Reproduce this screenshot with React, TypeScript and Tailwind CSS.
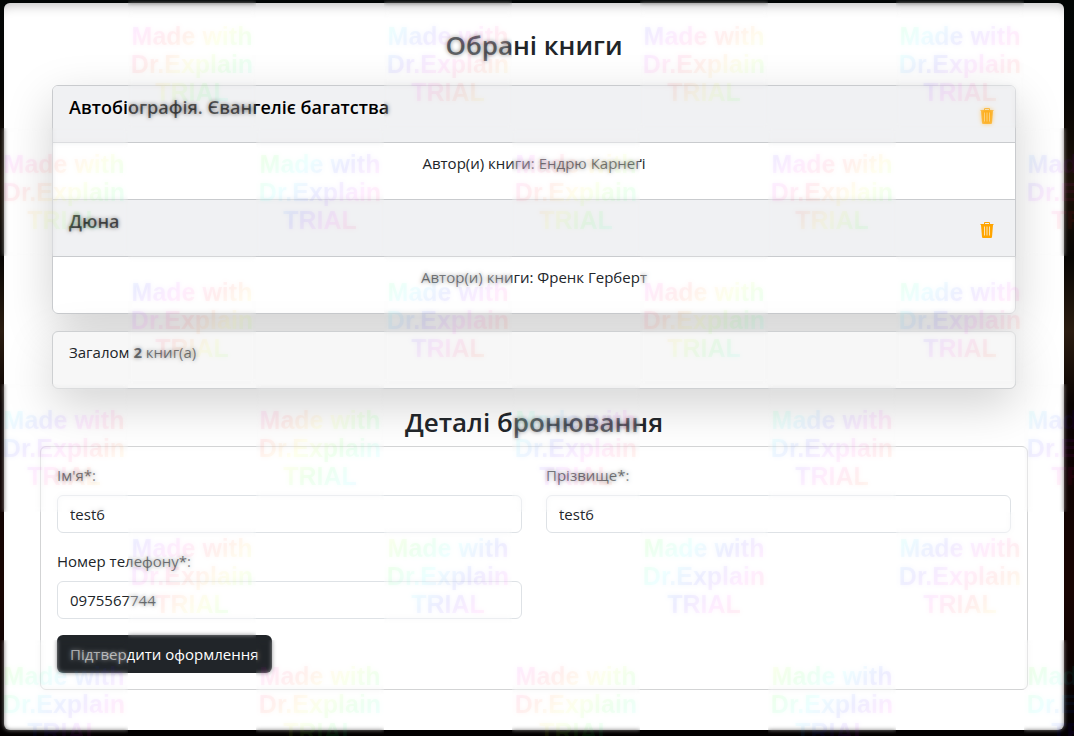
import { useId } from "react";

const books = [
  { title: "Автобіографія. Євангеліє багатства", author: "Ендрю Карнеґі" },
  { title: "Дюна", author: "Френк Герберт" },
];

// Starting hue of the rainbow in each stamped tile; null leaves the tile empty.
const tiles: (number | null)[][] = [
  [null, 245, null, 130, null, 195, null, 95, null],
  [235, null, 60, null, 235, null, 205, null, 165],
  [null, 180, null, 95, null, 250, null, 95, null],
  [125, null, 270, null, 95, null, 100, null, 135],
  [null, 190, null, 30, null, 60, null, 130, null],
  [50, null, 255, null, 250, null, 30, null, 60],
];

function rainbow(start: number) {
  const stops = Array.from({ length: 13 }, (_, i) => `hsla(${start + i * 30}, 100%, 50%, 0.09)`);
  return `linear-gradient(135deg, ${stops.join(", ")})`;
}

function Watermark() {
  return (
    <div aria-hidden="true" className="pointer-events-none absolute inset-0 overflow-hidden">
      {tiles.map((row, r) => (
        <div key={r} className="flex">
          {row.map((hue, c) =>
            hue === null ? (
              <div key={c} className="size-32 shrink-0" />
            ) : (
              <div key={c} className="grid size-32 shrink-0">
                <div className="col-start-1 row-start-1 size-32 opacity-50 backdrop-blur-[2px]" />
                <div
                  className="col-start-1 row-start-1 size-32 bg-clip-text pt-[22px] text-center font-['Liberation_Sans',sans-serif] text-[25px] leading-7 font-bold text-transparent"
                  style={{ backgroundImage: rainbow(hue) }}
                >
                  Made with
                  <br />
                  Dr.Explain
                  <br />
                  TRIAL
                </div>
              </div>
            ),
          )}
        </div>
      ))}
    </div>
  );
}

function TrashIcon() {
  return (
    <svg viewBox="0 0 14 16" className="h-4 w-3.5" fill="none" aria-hidden="true">
      <path d="M4.5 2.5v-2h5v2" stroke="#ffa500" />
      <path d="M0.5 2.5h13" stroke="#ffa500" />
      <path d="M1 3h12l-1 12q-.1 1-1 1H3q-.9 0-1-1z" fill="#ffa500" />
      <path d="M4.5 4.5v9M7 4.5v9M9.5 4.5v9" stroke="#fbe3b4" />
    </svg>
  );
}

function Field({ label, value, type = "text" }: { label: string; value: string; type?: string }) {
  const id = useId();
  return (
    <div>
      <label htmlFor={id} className="mb-2 block">
        {label}
      </label>
      <input
        id={id}
        type={type}
        defaultValue={value}
        className="block h-[38px] w-full rounded-md border border-[#dee2e6] bg-white px-3 outline-none focus:border-[#86b7fe]"
      />
    </div>
  );
}

export default function App() {
  return (
    <div className="relative min-h-screen overflow-hidden bg-[linear-gradient(180deg,#020605_0%,#050403_12%,#1c1208_25%,#080604_35%,#2a1c10_45%,#0a0302_55%,#180402_80%,#030101_100%)] pt-[3px] pr-2.5 pb-1.5 pl-1 font-['Open_Sans','Noto_Sans',sans-serif] text-[15px] leading-6 text-[#212529]">
      <main className="rounded-md bg-white px-9 pt-[25px] pb-10 shadow-[inset_0_10px_12px_-8px_#00000044]">
        <section className="px-3">
          <h1 className="mb-[22px] text-center text-[26px] leading-[35px] font-semibold">Обрані книги</h1>
          <div className="rounded-md shadow-[0_16px_48px_rgba(0,0,0,0.18)]">
            <div className="overflow-hidden rounded-md border border-[#c9cbce] bg-white">
              {books.map((book) => (
                <article key={book.title} className="border-b border-[#c9cbce] last:border-b-0">
                  <header className="flex h-[57px] items-start justify-between border-b border-[#c9cbce] bg-[#f0f1f3] px-4 pt-2">
                    <h2 className="text-lg leading-[26px] font-semibold text-black">{book.title}</h2>
                    <button type="button" aria-label="Видалити" className="mt-3.5 mr-[5px] cursor-pointer">
                      <TrashIcon />
                    </button>
                  </header>
                  <p className="h-14 pt-2 text-center">Автор(и) книги: {book.author}</p>
                </article>
              ))}
            </div>
          </div>
          <div className="mt-[17px] h-[58px] rounded-md border border-[#ced0d2] bg-[#f7f7f7] px-4 pt-2 shadow-[0_16px_48px_rgba(0,0,0,0.18)]">
            Загалом <b>2</b> книг(а)
          </div>
        </section>
        <section>
          <h2 className="relative mt-4 mb-1.5 text-center text-[26px] leading-[35px] font-semibold">
            Деталі бронювання
          </h2>
          <form
            className="relative rounded-md border border-[#d3d4d5] p-4"
            onSubmit={(event) => event.preventDefault()}
          >
            <div className="grid grid-cols-2 gap-x-6 gap-y-4">
              <Field label="Ім'я*:" value="test6" />
              <Field label="Прізвище*:" value="test6" />
              <Field label="Номер телефону*:" value="0975567744" type="tel" />
            </div>
            <button
              type="submit"
              className="mt-4 h-[38px] cursor-pointer rounded-md bg-[#212529] px-[13px] text-white"
            >
              Підтвердити оформлення
            </button>
          </form>
        </section>
      </main>
      <Watermark />
    </div>
  );
}
